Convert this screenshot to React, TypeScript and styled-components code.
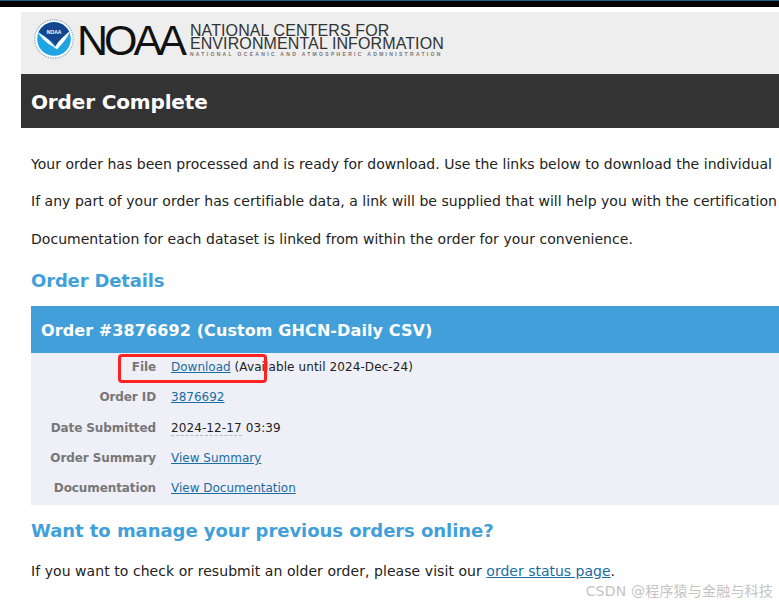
import React from "react";
import styled, { createGlobalStyle } from "styled-components";

const GlobalStyle = createGlobalStyle`
    html, body {
        margin: 0;
        padding: 0;
        background: #fff;
    }
    body {
        font-family: "DejaVu Sans", Verdana, sans-serif;
        font-size: 14px;
        color: #222;
    }
`;

const rows = [
    { label: "File", key: "file" },
    { label: "Order ID", key: "id" },
    { label: "Date Submitted", key: "date" },
    { label: "Order Summary", key: "summary" },
    { label: "Documentation", key: "docs" },
];

const NoaaSeal = () => (
    <SealIcon width="40" height="40" viewBox="0 0 40 40">
        <circle cx="20" cy="20" r="19.2" fill="#fff" stroke="#8fb4cc" strokeWidth="1.2" strokeDasharray="1.5 1" />
        <circle cx="20" cy="20" r="16.8" fill="#1ea4e2" />
        <path d="M4.6 13 A16.8 16.8 0 0 1 35.4 13 C31 17 26 21 21.5 27 C17 21 10 17 4.6 13 Z" fill="#14468f" />
        <path d="M4 13.5 C10 17 16 21 21 28 C25 21 31 16 36 12 C33 20 27 26 23 30.5 C19 27 10 24 4 13.5 Z" fill="#fff" />
        <text x="20" y="14.6" textAnchor="middle" fontFamily="Liberation Sans, sans-serif" fontWeight="bold" fontSize="5" fill="#fff">
            NOAA
        </text>
    </SealIcon>
);

const App: React.FunctionComponent = () => {
    return (
        <Page>
            <GlobalStyle />
            <TopBar />
            <Main>
                <Banner>
                    <NoaaSeal />
                    <Wordmark>NOAA</Wordmark>
                    <CenterName>
                        <CenterLine>NATIONAL CENTERS FOR</CenterLine>
                        <CenterLine>ENVIRONMENTAL INFORMATION</CenterLine>
                        <Agency>NATIONAL OCEANIC AND ATMOSPHERIC ADMINISTRATION</Agency>
                    </CenterName>
                </Banner>
                <TitleBar>Order Complete</TitleBar>
                <Content>
                    <Para>Your order has been processed and is ready for download. Use the links below to download the individual</Para>
                    <Para>If any part of your order has certifiable data, a link will be supplied that will help you with the certification</Para>
                    <Para>Documentation for each dataset is linked from within the order for your convenience.</Para>
                    <SectionTitle>Order Details</SectionTitle>
                    <OrderHead>Order #3876692 (Custom GHCN-Daily CSV)</OrderHead>
                    <OrderBody>
                        {rows.map(row => (
                            <Row key={row.key}>
                                <Label>{row.label}</Label>
                                <Value>
                                    {row.key === "file" && (
                                        <>
                                            <Link href="#">Download</Link> (Available until 2024-Dec-24)
                                        </>
                                    )}
                                    {row.key === "id" && <Link href="#">3876692</Link>}
                                    {row.key === "date" && (
                                        <>
                                            <Dated>2024-12-17</Dated> 03:39
                                        </>
                                    )}
                                    {row.key === "summary" && <Link href="#">View Summary</Link>}
                                    {row.key === "docs" && <Link href="#">View Documentation</Link>}
                                </Value>
                            </Row>
                        ))}
                        <RedMark />
                    </OrderBody>
                    <ManageTitle>Want to manage your previous orders online?</ManageTitle>
                    <Para $tracking={0.06}>
                        If you want to check or resubmit an older order, please visit our{" "}
                        <Link href="#">order status page</Link>.
                    </Para>
                </Content>
            </Main>
            <Watermark>CSDN @程序猿与金融与科技</Watermark>
        </Page>
    );
};

const Page = styled.div`
    position: relative;
    width: 779px;
    height: 605px;
    overflow: hidden;
    background: #fff;
`;

const TopBar = styled.div`
    height: 6px;
    background: #000;
    border-top: 1px solid #1d5f7a;
`;

const Main = styled.div`
    margin: 5px 0 0 21px;
    width: 758px;
`;

const Banner = styled.div`
    height: 62px;
    background: #eee;
    display: flex;
    align-items: center;
    padding-left: 13px;
    padding-bottom: 6px;
    box-sizing: border-box;
`;

const SealIcon = styled.svg`
    flex: none;
    margin-bottom: 2px;
`;

const Wordmark = styled.div`
    font-family: "Liberation Sans", Arial, sans-serif;
    font-size: 43px;
    letter-spacing: -4px;
    color: #111;
    margin-left: 3px;
    line-height: 1;
`;

const CenterName = styled.div`
    margin-left: 7px;
    margin-top: 3px;
    font-family: "Liberation Sans", Arial, sans-serif;
    color: #333;
`;

const CenterLine = styled.div`
    font-size: 16px;
    line-height: 12.5px;
    white-space: nowrap;
    letter-spacing: 0.11px;
`;

const Agency = styled.div`
    font-size: 5px;
    font-weight: bold;
    line-height: 8px;
    letter-spacing: 2.32px;
    color: #777;
    white-space: nowrap;
`;

const TitleBar = styled.h1`
    margin: 0;
    height: 54px;
    line-height: 56px;
    background: #333;
    color: #fff;
    font-size: 20px;
    font-weight: bold;
    letter-spacing: -0.15px;
    padding-left: 10px;
`;

const Content = styled.div`
    padding-left: 10px;
`;

const Para = styled.p<{ $tracking?: number }>`
    margin: 0;
    height: 37.5px;
    line-height: 37.5px;
    white-space: nowrap;
    font-size: 14px;
    letter-spacing: ${props => props.$tracking ?? 0.03}px;
    color: #222;

    &:first-child {
        margin-top: 17.5px;
    }
`;

const SectionTitle = styled.h2`
    margin: 2px 0 0;
    height: 41px;
    line-height: 41px;
    font-size: 18px;
    font-weight: bold;
    letter-spacing: -0.15px;
    color: #429fd9;
`;

const OrderHead = styled.div`
    margin-top: 5px;
    height: 47px;
    line-height: 49px;
    background: #429fd9;
    color: #fff;
    font-size: 16px;
    font-weight: bold;
    letter-spacing: 0.1px;
    padding-left: 10px;
    white-space: nowrap;
`;

const OrderBody = styled.div`
    position: relative;
    display: flow-root;
    background: #eeeff7;
    height: 152px;
    box-sizing: border-box;
`;

const Row = styled.div`
    display: flex;
    height: 30.3px;
    align-items: center;
    font-size: 12px;

    &:first-child {
        margin-top: -1px;
    }
`;

const Label = styled.div`
    width: 125px;
    text-align: right;
    font-weight: bold;
    letter-spacing: -0.1px;
    color: #777;
    white-space: nowrap;
`;

const Value = styled.div`
    margin-left: 15px;
    color: #222;
    white-space: nowrap;
    letter-spacing: 0.1px;
`;

const Link = styled.a`
    color: #1a6da3;
    letter-spacing: 0;
    text-decoration: underline;
`;

const Dated = styled.span`
    border-bottom: 1px dashed #bbb;
`;

const RedMark = styled.div`
    position: absolute;
    left: 87px;
    top: 1px;
    width: 149px;
    height: 29px;
    border: 3px solid #f22;
    border-radius: 4px;
    box-sizing: border-box;
`;

const ManageTitle = styled.h2`
    margin: 6px 0 2px;
    height: 40px;
    line-height: 40px;
    font-size: 18px;
    font-weight: bold;
    letter-spacing: -0.05px;
    color: #429fd9;
    white-space: nowrap;
`;

const Watermark = styled.div`
    position: absolute;
    right: 6px;
    bottom: 5px;
    font-family: "DejaVu Sans", "Noto Sans CJK SC", sans-serif;
    font-size: 14px;
    letter-spacing: 0.2px;
    color: #c4c4c4;
    white-space: nowrap;
`;

export default App;
